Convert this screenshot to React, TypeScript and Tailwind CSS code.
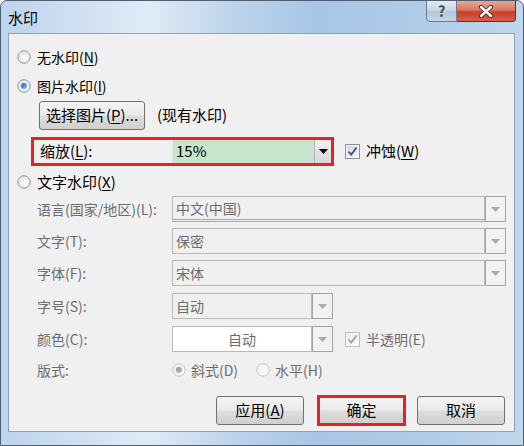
import React from "react";

const cjk = "font-['Microsoft_YaHei','Noto_Sans_CJK_SC',sans-serif]";

function Radio({ checked = false, disabled = false }: { checked?: boolean; disabled?: boolean }) {
  const id = `r-${checked ? 1 : 0}-${disabled ? 1 : 0}`;
  const ring = disabled ? "#c3c3c3" : "#8a8c8e";
  return (
    <svg width="14" height="14" viewBox="0 0 14 14" className="shrink-0">
      <defs>
        <linearGradient id={`${id}-in`} x1="0" y1="0" x2="1" y2="1">
          <stop offset="0" stopColor={disabled ? "#e4e4e4" : "#c9c9c9"} />
          <stop offset="1" stopColor="#fdfdfd" />
        </linearGradient>
        <linearGradient id={`${id}-dot`} x1="0" y1="0" x2="1" y2="1">
          <stop offset="0" stopColor={disabled ? "#8c8c8c" : "#1b5fbf"} />
          <stop offset="1" stopColor={disabled ? "#c4c4c4" : "#7fc0f5"} />
        </linearGradient>
      </defs>
      <circle cx="7" cy="7" r="6.2" fill="#f6f6f6" stroke={ring} strokeWidth="1" />
      <circle cx="7" cy="7" r="4.6" fill={`url(#${id}-in)`} />
      <circle cx="7" cy="7" r="3.4" fill="#f8f8f8" />
      {checked && <circle cx="7" cy="7" r="3" fill={`url(#${id}-dot)`} />}
    </svg>
  );
}

function Check({ disabled = false }: { disabled?: boolean }) {
  const id = `c-${disabled ? 1 : 0}`;
  return (
    <svg width="15" height="15" viewBox="0 0 15 15" className="shrink-0">
      <defs>
        <linearGradient id={id} x1="0" y1="0" x2="1" y2="1">
          <stop offset="0" stopColor={disabled ? "#e8e8e8" : "#d2d4d8"} />
          <stop offset="1" stopColor="#fbfbfb" />
        </linearGradient>
      </defs>
      <rect x="0.5" y="0.5" width="14" height="14" fill="#f8f8f8" stroke={disabled ? "#bdbdbd" : "#8e8f8f"} />
      <rect x="2" y="2" width="11" height="11" fill={`url(#${id})`} />
      <path
        d="M3.6 7.6 L6.2 10.6 L11.6 3.6"
        fill="none"
        stroke={disabled ? "#a3a3a3" : "#3d4f95"}
        strokeWidth="1.8"
      />
    </svg>
  );
}

function Arrow({ color }: { color: string }) {
  return (
    <svg width="9" height="5" viewBox="0 0 9 5">
      <path d="M0 0 H9 L4.5 5 Z" fill={color} />
    </svg>
  );
}

function DisabledCombo({ text, wide = true, underline = false, white = false, center = false }: {
  text: string;
  wide?: boolean;
  underline?: boolean;
  white?: boolean;
  center?: boolean;
}) {
  return (
    <div className={`flex h-[26px] ${wide ? "w-[334px]" : "w-[161px]"}`}>
      <div
        className={`flex-1 flex items-center border border-[#b9b9b9] ${
          underline ? "border-b-[3px] border-double border-b-[#a7a7a7]" : ""
        } ${white ? "bg-white" : "bg-[#f0f0f0]"} ${center ? "justify-center" : "pl-[3px]"} text-[14px] text-[#6d6d6d]`}
      >
        {text}
      </div>
      <div className="w-[21px] flex items-center justify-center border border-[#a3a3a3] bg-[#f2f2f2]">
        <Arrow color="#a9a9a9" />
      </div>
    </div>
  );
}

function Btn({ children, red = false }: { children: React.ReactNode; red?: boolean }) {
  return (
    <div
      className={`flex items-center justify-center rounded-[3px] bg-[linear-gradient(180deg,#f3f3f3_0%,#ebebeb_48%,#dddddd_52%,#cfcfcf_100%)] text-[15px] text-black ${
        red ? "w-[89px] h-[31px] border-[3px] border-[#e3232b] rounded-none" : "w-[88px] h-[29px] border border-[#707070]"
      }`}
    >
      {children}
    </div>
  );
}

function DisabledRow({ label, children }: { label: string; children: React.ReactNode }) {
  return (
    <div className="flex items-center pl-[28px] text-[#6d6d6d]">
      <div className="w-[135px] text-[14px]">{label}</div>
      {children}
    </div>
  );
}

export default function App() {
  return (
    <div className={`${cjk} w-[524px] h-[446px] flex flex-col rounded-t-[7px] border border-[#4f5e70] bg-[linear-gradient(90deg,#bcd4ee_0%,#cfe0f2_15%,#e0ebf6_28%,#bcd3ec_45%,#a8c6e6_60%,#aecbe8_80%,#c0d7ee_100%)] overflow-hidden`}>
      {/* title bar */}
      <div className="h-[32px] flex items-start">
        <div className="pl-[7px] pt-[7px] text-[15px] leading-[20px] text-black">水印</div>
        <div className="ml-auto mr-[7px] flex -mt-px">
          <div className="w-[31px] h-[22px] flex items-center justify-center rounded-bl-[4px] border border-[#6b7c8e] bg-[linear-gradient(180deg,#e3ebf3_0%,#c8d6e4_50%,#b4c6d8_51%,#c7d6e5_100%)] text-[15px] font-bold text-[#3d4c5e]">
            ?
          </div>
          <div className="w-[59px] h-[22px] flex items-center justify-center rounded-br-[4px] border border-l-0 border-[#6e2a22] bg-[linear-gradient(180deg,#e9a797_0%,#d9775f_45%,#c7402a_55%,#d5604a_100%)]">
            <svg width="16" height="13" viewBox="0 0 16 13">
              <path d="M3 2 L13 11 M13 2 L3 11" stroke="#5a2018" strokeWidth="4.2" strokeLinecap="round" />
              <path d="M3 2 L13 11 M13 2 L3 11" stroke="#ffffff" strokeWidth="2.4" strokeLinecap="round" />
            </svg>
          </div>
        </div>
      </div>

      {/* client area */}
      <div className="flex-1 ml-[7px] mr-[8px] mb-[13px] border border-[#8da2ba] bg-[#f0f0f0] flex flex-col pt-[11px] text-[14px] text-black">
        <div className="h-[24px] flex items-center pl-[8px] gap-[6px]">
          <Radio />
          <span>
            无水印(<span className="underline underline-offset-2">N</span>)
          </span>
        </div>
        <div className="mt-[5px] h-[24px] flex items-center pl-[8px] gap-[6px]">
          <Radio checked />
          <span>
            图片水印(<span className="underline underline-offset-2">I</span>)
          </span>
        </div>
        <div className="mt-[3px] h-[29px] flex items-center pl-[30px]">
          <div className="w-[106px] h-[29px] flex items-center justify-center rounded-[3px] border border-[#707070] bg-[linear-gradient(180deg,#f3f3f3_0%,#ebebeb_48%,#dddddd_52%,#cfcfcf_100%)] text-[15px]">
            选择图片(<span className="underline underline-offset-2">P</span>)...
          </div>
          <span className="ml-[12px] text-[15px]">(现有水印)</span>
        </div>

        <div className="mt-[7px] h-[29px] flex items-center pl-[22px]">
          <div className="h-[29px] w-[303px] flex border-[3px] border-[#e2232a]">
            <div className="w-[138px] pl-[6px] flex items-center text-[15px]">
              缩放(<span className="underline underline-offset-2">L</span>):
            </div>
            <div className="flex-1 flex items-center pl-[3px] border-l border-[#e6e6e6] bg-[#c7e5cd] text-[15px]">
              15%
            </div>
            <div className="w-[17px] flex items-center justify-center border-l border-[#b4b4b4] bg-[linear-gradient(180deg,#f0f0f0_0%,#d9d9d9_100%)]">
              <Arrow color="#000000" />
            </div>
          </div>
          <div className="ml-[11px] flex items-center gap-[6px] text-[15px]">
            <Check />
            <span>
              冲蚀(<span className="underline underline-offset-2">W</span>)
            </span>
          </div>
        </div>

        <div className="mt-[4px] h-[24px] flex items-center pl-[8px] gap-[6px]">
          <Radio />
          <span className="text-[15px]">
            文字水印(<span className="underline underline-offset-2">X</span>)
          </span>
        </div>

        <div className="mt-[2px]">
          <DisabledRow label="语言(国家/地区)(L):">
            <DisabledCombo text="中文(中国)" underline />
          </DisabledRow>
        </div>
        <div className="mt-[6px]">
          <DisabledRow label="文字(T):">
            <DisabledCombo text="保密" />
          </DisabledRow>
        </div>
        <div className="mt-[6px]">
          <DisabledRow label="字体(F):">
            <DisabledCombo text="宋体" />
          </DisabledRow>
        </div>
        <div className="mt-[7px]">
          <DisabledRow label="字号(S):">
            <DisabledCombo text="自动" wide={false} />
          </DisabledRow>
        </div>
        <div className="mt-[7px]">
          <DisabledRow label="颜色(C):">
            <DisabledCombo text="自动" wide={false} white center />
            <div className="ml-[12px] flex items-center gap-[6px] text-[14px]">
              <Check disabled />
              <span>半透明(E)</span>
            </div>
          </DisabledRow>
        </div>
        <div className="mt-[6px] h-[24px]">
          <DisabledRow label="版式:">
            <div className="flex items-center gap-[5px] h-[24px]">
              <Radio checked disabled />
              <span>斜式(D)</span>
            </div>
            <div className="ml-[18px] flex items-center gap-[5px] h-[24px]">
              <Radio disabled />
              <span>水平(H)</span>
            </div>
          </DisabledRow>
        </div>

        <div className="mt-[13px] flex items-center justify-end pr-[9px]">
          <Btn>
            应用(<span className="underline underline-offset-2">A</span>)
          </Btn>
          <div className="ml-[13px]">
            <Btn red>确定</Btn>
          </div>
          <div className="ml-[11px]">
            <Btn>取消</Btn>
          </div>
        </div>
      </div>
    </div>
  );
}
